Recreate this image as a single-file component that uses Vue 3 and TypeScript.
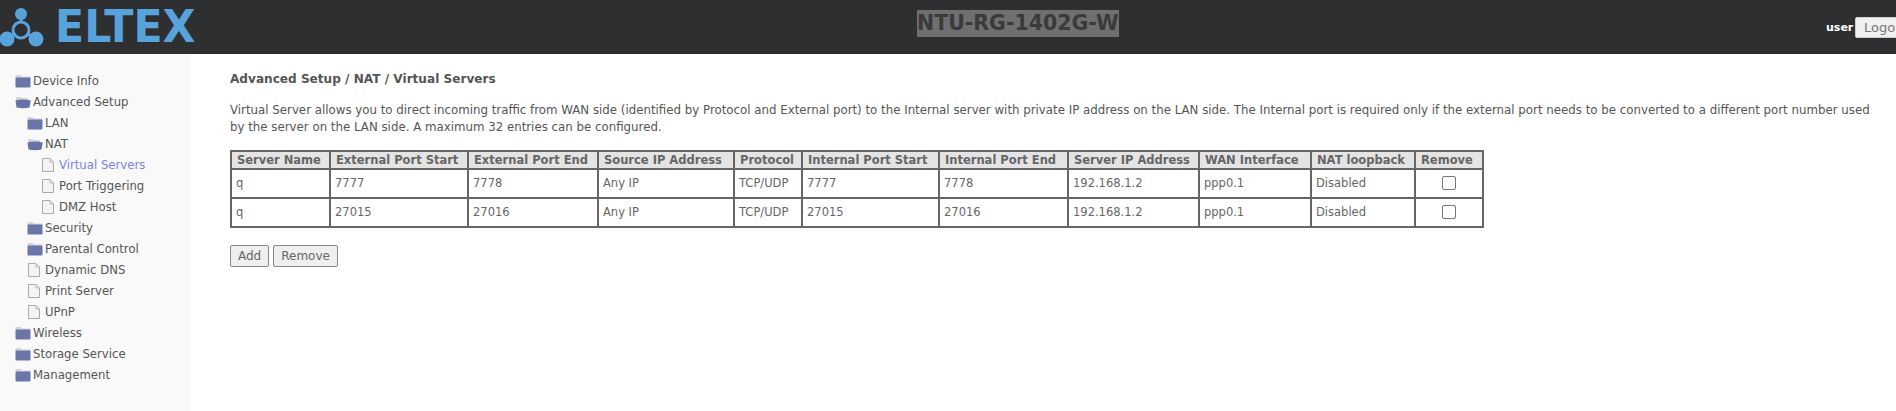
<template>
  <div class="page">
    <header class="topbar">
      <div class="logo">
        <svg class="logo-mark" width="54" height="46" viewBox="0 0 54 46">
          <g fill="none" stroke="#58a3dc" stroke-width="3">
            <circle cx="21" cy="26" r="8" />
            <path d="M21 10 V18" />
            <path d="M6 35 L14 30" />
            <path d="M36 35 L28 30" />
          </g>
          <circle cx="21" cy="10" r="6" fill="#58a3dc" />
          <circle cx="7" cy="35" r="7.5" fill="#58a3dc" />
          <circle cx="36" cy="35" r="7.5" fill="#58a3dc" />
        </svg>
        <span class="logo-word">ELTEX</span>
      </div>
      <div class="model"><span>NTU-RG-1402G-W</span></div>
      <div class="session">
        <span class="username">user</span>
        <button class="logout" type="button">Logout</button>
      </div>
    </header>

    <div class="body">
      <nav class="sidebar">
        <div
          v-for="item in menu"
          :key="item.label"
          class="tree-row"
          :class="[`level-${item.level}`, `icon-${item.icon}`, { current: item.current }]"
        >
          <svg v-if="item.icon === 'file'" class="tree-icon" width="14" height="16" viewBox="0 0 14 16">
            <path d="M1.5 1.5 H9 L12.5 5 V14.5 H1.5 Z" fill="#f4f4f4" stroke="#aaa" />
            <path d="M9 1.5 V5 H12.5" fill="none" stroke="#bbb" />
          </svg>
          <svg v-else-if="item.icon === 'open'" class="tree-icon" width="16" height="14" viewBox="0 0 16 14">
            <path d="M1 2 H6 L7 3 H13 V6 H1 Z" fill="#d4d5d8" />
            <path d="M0.5 5.5 Q8 3.5 15.8 5.5 L14.5 12.5 Q8 14 1.5 12.5 Z" fill="#6673a6" />
          </svg>
          <svg v-else class="tree-icon" width="16" height="14" viewBox="0 0 16 14">
            <path d="M0.5 2 Q0.5 1 1.5 1 H6 L7 2.5 H15 Q15.5 2.5 15.5 3 V4 H0.5 Z" fill="#d4d5d8" />
            <rect x="0.5" y="3.5" width="15" height="10" rx="1" fill="#6a76a8" />
          </svg>
          <span>{{ item.label }}</span>
        </div>
      </nav>

      <main class="content">
        <h1 class="page-title">Advanced Setup / NAT / Virtual Servers</h1>
        <p class="intro">
          Virtual Server allows you to direct incoming traffic from WAN side (identified by Protocol and External port) to the Internal server with private IP address on the LAN side. The Internal port is required only if the external port needs to be converted to a different port number used by the server on the LAN side. A maximum 32 entries can be configured.
        </p>

        <table class="servers">
          <colgroup>
            <col v-for="col in columns" :key="col.title" :style="{ width: col.width + 'px' }" />
          </colgroup>
          <thead>
            <tr>
              <th v-for="col in columns" :key="col.title">{{ col.title }}</th>
            </tr>
          </thead>
          <tbody>
            <tr v-for="row in rows" :key="row.start">
              <td>q</td>
              <td>{{ row.start }}</td>
              <td>{{ row.end }}</td>
              <td>Any IP</td>
              <td>TCP/UDP</td>
              <td>{{ row.start }}</td>
              <td>{{ row.end }}</td>
              <td>192.168.1.2</td>
              <td>ppp0.1</td>
              <td>Disabled</td>
              <td class="check-cell"><span class="check"></span></td>
            </tr>
          </tbody>
        </table>

        <div class="actions">
          <button type="button">Add</button>
          <button type="button">Remove</button>
        </div>
      </main>
    </div>
  </div>
</template>

<script setup lang="ts">
interface MenuItem {
  label: string
  level: number
  icon: 'folder' | 'open' | 'file'
  current?: boolean
}

const menu: MenuItem[] = [
  { label: 'Device Info', level: 1, icon: 'folder' },
  { label: 'Advanced Setup', level: 1, icon: 'open' },
  { label: 'LAN', level: 2, icon: 'folder' },
  { label: 'NAT', level: 2, icon: 'open' },
  { label: 'Virtual Servers', level: 3, icon: 'file', current: true },
  { label: 'Port Triggering', level: 3, icon: 'file' },
  { label: 'DMZ Host', level: 3, icon: 'file' },
  { label: 'Security', level: 2, icon: 'folder' },
  { label: 'Parental Control', level: 2, icon: 'folder' },
  { label: 'Dynamic DNS', level: 2, icon: 'file' },
  { label: 'Print Server', level: 2, icon: 'file' },
  { label: 'UPnP', level: 2, icon: 'file' },
  { label: 'Wireless', level: 1, icon: 'folder' },
  { label: 'Storage Service', level: 1, icon: 'folder' },
  { label: 'Management', level: 1, icon: 'folder' },
]

const columns = [
  { title: 'Server Name', width: 99 },
  { title: 'External Port Start', width: 138 },
  { title: 'External Port End', width: 130 },
  { title: 'Source IP Address', width: 136 },
  { title: 'Protocol', width: 68 },
  { title: 'Internal Port Start', width: 137 },
  { title: 'Internal Port End', width: 129 },
  { title: 'Server IP Address', width: 131 },
  { title: 'WAN Interface', width: 112 },
  { title: 'NAT loopback', width: 104 },
  { title: 'Remove', width: 68 },
]

const rows = [
  { start: '7777', end: '7778' },
  { start: '27015', end: '27016' },
]
</script>

<style>
html,
body {
  margin: 0;
  background: #fff;
  overflow: hidden;
}
</style>

<style scoped>
.page {
  width: 1896px;
  height: 411px;
  overflow: hidden;
  font-family: "DejaVu Sans", sans-serif;
  font-size: 11px;
  color: #555;
}

.topbar {
  height: 54px;
  background: #2e2f31;
  display: flex;
  align-items: center;
  position: relative;
  overflow: hidden;
}

.logo {
  display: flex;
  align-items: center;
  width: 200px;
}

.logo-mark {
  flex: none;
}

.logo-word {
  font-family: "DejaVu Sans", sans-serif;
  font-size: 44px;
  font-weight: bold;
  line-height: 46px;
  color: #58a3dc;
  transform: scaleX(0.97);
  transform-origin: left center;
  margin-left: 1px;
}

.model {
  position: absolute;
  top: 10px;
  left: 917px;
  font-size: 20.5px;
  font-weight: bold;
  color: #3a3a3c;
}

.model span {
  display: inline-block;
  line-height: 27px;
  background: #6f6f6f;
}

.session {
  margin-left: auto;
  width: 70px;
  display: flex;
  align-items: center;
  flex: none;
}

.username {
  width: 29px;
  flex: none;
  color: #fff;
  font-size: 11px;
  font-weight: bold;
}

.logout {
  flex: none;
  height: 21px;
  width: 70px;
  padding: 0 8px;
  text-align: left;
  border: 1px solid #ccc;
  border-radius: 2px;
  background: #f0f0f0;
  color: #777;
  font: 13px "DejaVu Sans", sans-serif;
}

.body {
  display: flex;
  height: 357px;
}

.sidebar {
  width: 190px;
  flex: none;
  background: #f9f9f9;
  padding-top: 16px;
  box-sizing: border-box;
}

.tree-row {
  height: 21px;
  display: flex;
  align-items: center;
  gap: 2px;
  font-size: 11.7px;
  color: #555;
  white-space: nowrap;
}

.level-1 {
  padding-left: 15px;
}

.level-2 {
  padding-left: 27px;
}

.level-2.icon-file {
  gap: 4px;
}

.level-3 {
  padding-left: 41px;
  gap: 4px;
}

.current {
  color: #7b84e0;
}

.tree-icon {
  flex: none;
}

.content {
  flex: 1;
  padding: 17px 20px 0 40px;
  min-width: 0;
}

.page-title {
  margin: 0;
  font-size: 12.1px;
  line-height: 16px;
  font-weight: bold;
  color: #555;
}

.intro {
  margin: 15px 0 0;
  font-size: 11.8px;
  line-height: 17px;
  color: #555;
}

.servers {
  margin-top: 14px;
  border-collapse: collapse;
  table-layout: fixed;
  width: 1254px;
  border: 2px solid #666;
}

.servers th,
.servers td {
  border: 2px solid #666;
  padding: 0 4px;
  text-align: left;
  white-space: nowrap;
  overflow: hidden;
  font-size: 11.5px;
}

.servers th {
  height: 16px;
  padding-left: 5px;
  background: #e4e4e4;
  font-weight: bold;
  color: #666;
}

.servers td {
  height: 29px;
  padding-bottom: 1px;
  box-sizing: border-box;
  color: #666;
}

.servers .check-cell {
  text-align: center;
}

.check {
  display: inline-block;
  width: 12px;
  height: 12px;
  border: 1px solid #777;
  border-radius: 2px;
  background: #fff;
  vertical-align: middle;
}

.actions {
  margin-top: 17px;
  display: flex;
  gap: 4px;
}

.actions button {
  height: 22px;
  padding: 0 7px;
  border: 1px solid #888;
  border-radius: 2px;
  background: #efefef;
  color: #666;
  font: 12px "DejaVu Sans", sans-serif;
}
</style>
